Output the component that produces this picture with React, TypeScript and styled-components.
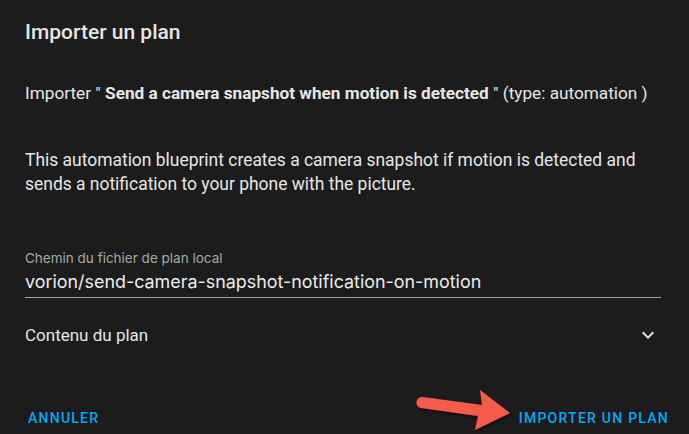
import React from "react";
import styled, { createGlobalStyle } from "styled-components";

const Global = createGlobalStyle`
  html, body { margin: 0; padding: 0; background: #1c1c1c; }
  body { font-family: Roboto, "Noto Sans", sans-serif; color: #e1e1e1; -webkit-font-smoothing: antialiased; }
`;

const Dialog = styled.div`
  width: 689px;
  height: 434px;
  box-sizing: border-box;
  background: #1c1c1c;
  display: flex;
  flex-direction: column;
  position: relative;
  overflow: hidden;
`;

const Content = styled.div`
  padding: 18px 28px 0 25px;
  display: flex;
  flex-direction: column;
`;

const Title = styled.h2`
  margin: 0;
  font-size: 21px;
  line-height: 28px;
  font-weight: 500;
  color: #e6e6e6;
`;

const ImportLine = styled.p`
  margin: 35px 0 0;
  font-size: 17.2px;
  line-height: 24px;
  font-weight: 400;
  color: #e6e6e6;
  b { font-weight: 700; }
`;

const Description = styled.p`
  margin: 44px 0 0;
  font-size: 17.45px;
  line-height: 23.5px;
  color: #e6e6e6;
`;

const Field = styled.div`
  margin-top: 54px;
  display: flex;
  flex-direction: column;
  padding-bottom: 5px;
  border-bottom: 1px solid #a3a3a3;
`;

const FieldLabel = styled.label`
  font-family: Inter, Roboto, sans-serif;
  font-size: 13.5px;
  line-height: 16px;
  color: #a8a8a8;
`;

const FieldValue = styled.div`
  margin-top: 6px;
  font-family: Inter, Roboto, sans-serif;
  font-size: 17.9px;
  line-height: 20px;
  color: #ececec;
`;

const Expander = styled.div`
  margin-top: 25px;
  display: flex;
  align-items: center;
  justify-content: space-between;
  font-size: 17px;
  line-height: 24px;
  color: #e6e6e6;
`;

const Chevron = styled.svg`
  width: 24px;
  height: 24px;
  margin-right: 1px;
`;

const Actions = styled.div`
  margin-top: auto;
  padding: 0 14px 0 22px;
  height: 36px;
  display: flex;
  align-items: center;
  justify-content: space-between;
`;

const TextButton = styled.button`
  background: none;
  border: none;
  padding: 4px 6px 0;
  height: 36px;
  font-family: Roboto, sans-serif;
  font-size: 14px;
  font-weight: 500;
  letter-spacing: 1.25px;
  text-transform: uppercase;
  color: #03a9f4;
`;

const Arrow = styled.svg`
  position: absolute;
  left: 410px;
  top: 382px;
  width: 110px;
  height: 56px;
  overflow: visible;
`;

export default function App() {
  return (
    <Dialog>
      <Global />
      <Content>
        <Title>Importer un plan</Title>
        <ImportLine>
          Importer " <b>Send a camera snapshot when motion is detected</b> " (type: automation )
        </ImportLine>
        <Description>
          This automation blueprint creates a camera snapshot if motion is detected and sends a
          notification to your phone with the picture.
        </Description>
        <Field>
          <FieldLabel>Chemin du fichier de plan local</FieldLabel>
          <FieldValue>vorion/send-camera-snapshot-notification-on-motion</FieldValue>
        </Field>
        <Expander>
          <span>Contenu du plan</span>
          <Chevron viewBox="0 0 24 24">
            <path d="M7.41 8.58L12 13.17l4.59-4.59L18 10l-6 6-6-6 1.41-1.42z" fill="#e1e1e1" />
          </Chevron>
        </Expander>
      </Content>
      <Actions>
        <TextButton>Annuler</TextButton>
        <TextButton>Importer un plan</TextButton>
      </Actions>
      <Arrow viewBox="410 382 110 56">
        <defs>
          <filter id="sh" x="-20%" y="-30%" width="140%" height="160%">
            <feDropShadow dx="1" dy="2" stdDeviation="1.5" floodColor="#000" floodOpacity="0.6" />
          </filter>
        </defs>
        <g filter="url(#sh)" fill="#f65a4b">
          <path d="M423 397 L482 405 L480 390 L510 413 L475 430 L478 416 L421 408 A5.5 5.5 0 0 1 423 397 Z" />
        </g>
      </Arrow>
    </Dialog>
  );
}
